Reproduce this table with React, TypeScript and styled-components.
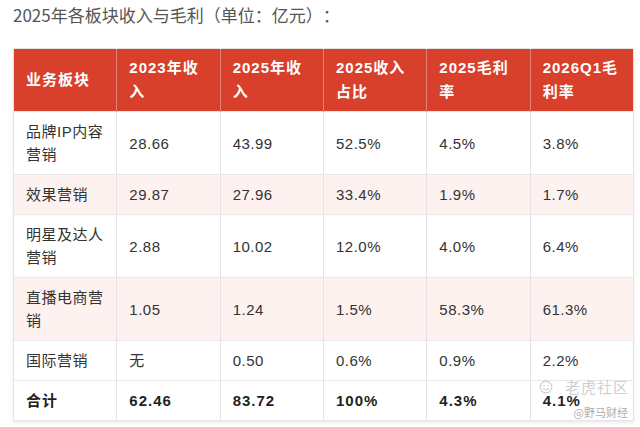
import styled, { createGlobalStyle } from "styled-components";

const GlobalStyle = createGlobalStyle`
  html, body {
    margin: 0;
    padding: 0;
    background: #ffffff;
  }
  body {
    font-family: "Liberation Sans", "Noto Sans CJK SC", sans-serif;
    color: #333333;
  }
`;

const Page = styled.div`
  position: relative;
  width: 640px;
  height: 427px;
  padding: 3px 6px 0 13px;
  box-sizing: border-box;
  overflow: hidden;
`;

const Title = styled.h2`
  margin: 0 0 21px;
  font-family: "Noto Sans CJK SC", sans-serif;
  font-size: 17px;
  line-height: 24px;
  font-weight: 400;
  color: #555555;
  white-space: nowrap;
  text-spacing-trim: space-all;
`;

const Table = styled.table`
  width: 621px;
  table-layout: fixed;
  border-collapse: collapse;
  border: 1px solid #e4e4e4;
  box-shadow: 0 2px 3px rgba(0, 0, 0, 0.08);
`;

const HeadCell = styled.th`
  background: #d8402b;
  color: #ffffff;
  text-align: left;
  vertical-align: middle;
  padding: 7px 12px;
  font-size: 15px;
  line-height: 24px;
  letter-spacing: 1px;
  font-weight: 700;
  border-left: 1px solid rgba(255, 255, 255, 0.35);
  &:first-child {
    border-left: none;
  }
`;

const Row = styled.tr<{ $tint?: boolean }>`
  background: ${(p) => (p.$tint ? "#fdf2f0" : "#ffffff")};
`;

const Cell = styled.td<{ $bold?: boolean }>`
  padding: 8px 12px;
  font-size: 15px;
  line-height: 23px;
  letter-spacing: ${(p) => (p.$bold ? "1px" : "0.5px")};
  font-weight: ${(p) => (p.$bold ? 700 : 400)};
  color: ${(p) => (p.$bold ? "#1f1f1f" : "#333333")};
  vertical-align: middle;
  border-top: 1px solid #e8e8e8;
  border-left: 1px solid #e4e4e4;
`;

const Watermark = styled.div`
  position: absolute;
  right: 11px;
  bottom: 30px;
  display: flex;
  align-items: center;
  gap: 12px;
  color: rgba(165, 165, 165, 0.55);
  font-family: "Noto Sans CJK SC", sans-serif;
  font-size: 15px;
  line-height: 20px;
  letter-spacing: 1px;
`;

const Credit = styled.div`
  position: absolute;
  right: 12px;
  bottom: 8px;
  font-family: "Noto Sans CJK SC", sans-serif;
  font-size: 11px;
  line-height: 14px;
  color: rgba(150, 150, 150, 0.8);
  text-shadow: 0 0 2px #ffffff;
`;

const headers = ["业务板块", "2023年收入", "2025年收入", "2025收入占比", "2025毛利率", "2026Q1毛利率"];

const rows = [
  ["品牌IP内容营销", "28.66", "43.99", "52.5%", "4.5%", "3.8%"],
  ["效果营销", "29.87", "27.96", "33.4%", "1.9%", "1.7%"],
  ["明星及达人营销", "2.88", "10.02", "12.0%", "4.0%", "6.4%"],
  ["直播电商营销", "1.05", "1.24", "1.5%", "58.3%", "61.3%"],
  ["国际营销", "无", "0.50", "0.6%", "0.9%", "2.2%"],
];

const total = ["合计", "62.46", "83.72", "100%", "4.3%", "4.1%"];

export default function App() {
  return (
    <Page>
      <GlobalStyle />
      <Title>2025年各板块收入与毛利（单位：亿元）：</Title>
      <Table>
        <thead>
          <tr>
            {headers.map((h) => (
              <HeadCell key={h}>{h}</HeadCell>
            ))}
          </tr>
        </thead>
        <tbody>
          {rows.map((r, i) => (
            <Row key={r[0]} $tint={i % 2 === 1}>
              {r.map((c, j) => (
                <Cell key={j}>{c}</Cell>
              ))}
            </Row>
          ))}
          <Row>
            {total.map((c, j) => (
              <Cell key={j} $bold>
                {c}
              </Cell>
            ))}
          </Row>
        </tbody>
      </Table>
      <Watermark>
        <svg width="14" height="14" viewBox="0 0 18 18" fill="none" stroke="currentColor" strokeWidth="1.5">
          <circle cx="9" cy="9" r="7.5" />
          <path d="M5.5 10.5c1 1.5 2.2 2 3.5 2s2.5-.5 3.5-2" />
          <circle cx="6.5" cy="7" r="0.9" fill="currentColor" stroke="none" />
          <circle cx="11.5" cy="7" r="0.9" fill="currentColor" stroke="none" />
        </svg>
        老虎社区
      </Watermark>
      <Credit>@野马财经</Credit>
    </Page>
  );
}
